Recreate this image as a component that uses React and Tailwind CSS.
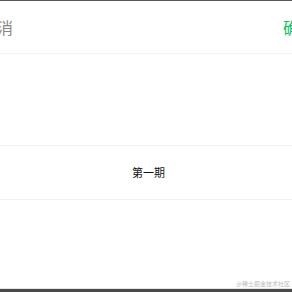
import React from "react";

const font = { fontFamily: '"Noto Sans CJK SC", "Noto Sans", sans-serif' };

export default function App() {
  return (
    <div
      className="h-[292px] w-[292px] overflow-hidden bg-white"
      style={font}
    >
      <div className="flex h-full flex-col border-t border-t-[#555555] border-b-[3px] border-b-[#4a4a4a]">
        <div className="-ml-[19px] -mr-[23px] flex h-[53px] shrink-0 items-center justify-between border-b border-[#f2f2f2]">
          <span className="text-[16px] leading-none text-[#888888]">取消</span>
          <span className="text-[16px] leading-none text-[#07c160]">确定</span>
        </div>
        <div className="flex flex-1 flex-col">
          <div className="h-[91px] shrink-0" />
          <div className="flex h-[55px] shrink-0 items-center justify-center border-y border-[#f2f2f2] pl-[5px] text-[11px] text-[#111111]">
            第一期
          </div>
          <div className="flex flex-1 items-end justify-end border-b border-[#e5e5e5] pr-[2px] pb-[1px]">
            <span className="text-[6px] leading-none text-[#bbbbbb]">
              @稀土掘金技术社区
            </span>
          </div>
        </div>
      </div>
    </div>
  );
}
